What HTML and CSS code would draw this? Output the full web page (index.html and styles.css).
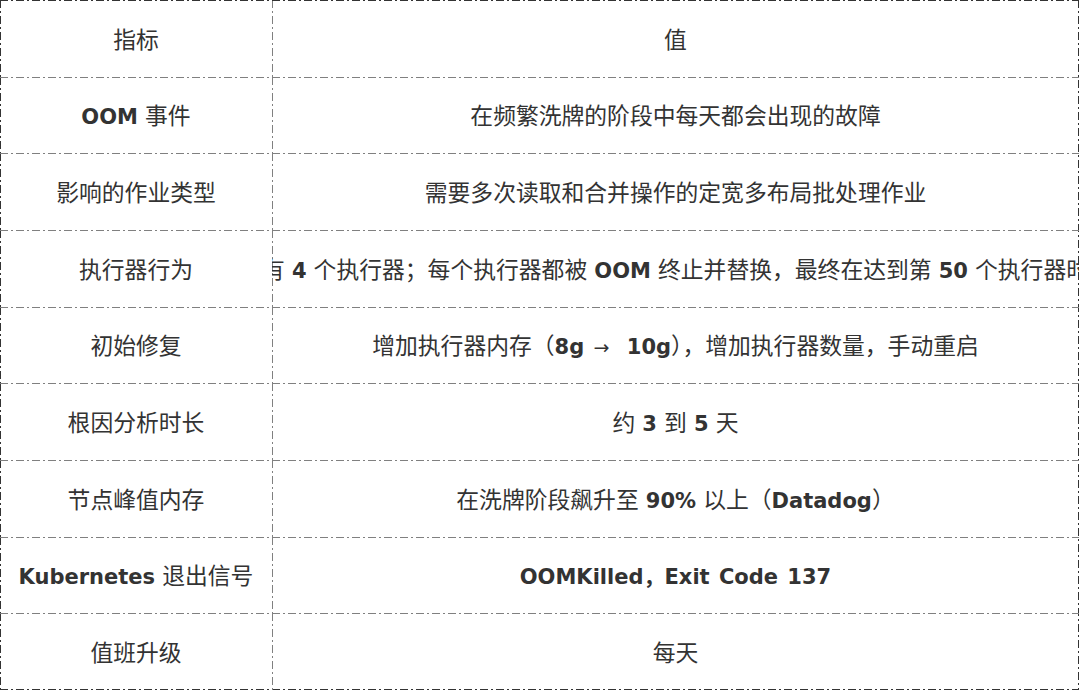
FILE: index.html
```html
<!DOCTYPE html>
<html lang="zh-CN">
<head>
<meta charset="utf-8">
<title>OOM 指标</title>
<link rel="stylesheet" href="styles.css">
</head>
<body>
<div class="table">
  <div class="cell first-row first-col"><span class="txt">指标</span></div>
  <div class="cell first-row"><span class="txt">值</span></div>

  <div class="cell first-col"><span class="txt"><b>OOM</b> 事件</span></div>
  <div class="cell"><span class="txt">在频繁洗牌的阶段中每天都会出现的故障</span></div>

  <div class="cell first-col"><span class="txt">影响的作业类型</span></div>
  <div class="cell"><span class="txt">需要多次读取和合并操作的定宽多布局批处理作业</span></div>

  <div class="cell first-col"><span class="txt">执行器行为</span></div>
  <div class="cell"><span class="txt">仅有 <b>4</b> 个执行器；每个执行器都被 <b>OOM</b> 终止并替换，最终在达到第 <b>50</b> 个执行器时失</span></div>

  <div class="cell first-col"><span class="txt">初始修复</span></div>
  <div class="cell"><span class="txt">增加执行器内存（<b>8g <span class="arrow">→</span> 10g</b>），增加执行器数量，手动重启</span></div>

  <div class="cell first-col"><span class="txt">根因分析时长</span></div>
  <div class="cell"><span class="txt">约 <b>3</b> 到 <b>5</b> 天</span></div>

  <div class="cell first-col"><span class="txt">节点峰值内存</span></div>
  <div class="cell"><span class="txt">在洗牌阶段飙升至 <b>90%</b> 以上（<b>Datadog</b>）</span></div>

  <div class="cell first-col"><span class="txt"><b>Kubernetes</b> 退出信号</span></div>
  <div class="cell"><span class="txt"><b>OOMKilled，Exit Code 137</b></span></div>

  <div class="cell first-col"><span class="txt">值班升级</span></div>
  <div class="cell"><span class="txt">每天</span></div>
</div>
</body>
</html>
```

FILE: styles.css
```css
html, body {
  margin: 0;
  padding: 0;
  background: #ffffff;
}

body {
  font-family: "Noto Sans CJK SC", "DejaVu Sans", sans-serif;
  font-size: 22.8px;
  color: #333333;
}

.table {
  --inner: #808080;
  --outer: #333333;
  display: grid;
  grid-template-columns: 272px 1fr;
  grid-template-rows: repeat(9, 1fr);
  width: 1079px;
  height: 690px;
  background:
    repeating-linear-gradient(180deg, var(--outer) 0 8px, transparent 8px 11px, var(--outer) 11px 13px, transparent 13px 16px) right top / 1px 100% no-repeat,
    repeating-linear-gradient(90deg, var(--outer) 0 8px, transparent 8px 11px, var(--outer) 11px 13px, transparent 13px 16px) left bottom / 100% 1px no-repeat;
}

.cell {
  --line: var(--inner);
  --vline: var(--inner);
  display: flex;
  align-items: center;
  justify-content: center;
  overflow: hidden;
  min-width: 0;
  background:
    repeating-linear-gradient(90deg, var(--line) 0 8px, transparent 8px 11px, var(--line) 11px 13px, transparent 13px 16px) left top / 100% 1px no-repeat,
    repeating-linear-gradient(180deg, var(--vline) 0 8px, transparent 8px 11px, var(--vline) 11px 13px, transparent 13px 16px) left top / 1px 100% no-repeat;
}

.txt {
  white-space: pre;
  word-spacing: 2px;
  flex: none;
}

.first-row {
  --line: var(--outer);
}

.first-col {
  --vline: var(--outer);
}

b {
  font-family: "DejaVu Sans", "Noto Sans CJK SC", sans-serif;
  font-size: 21px;
  font-weight: bold;
}

.arrow {
  font-weight: normal;
  font-size: 19px;
  margin-right: 8px;
}
```
